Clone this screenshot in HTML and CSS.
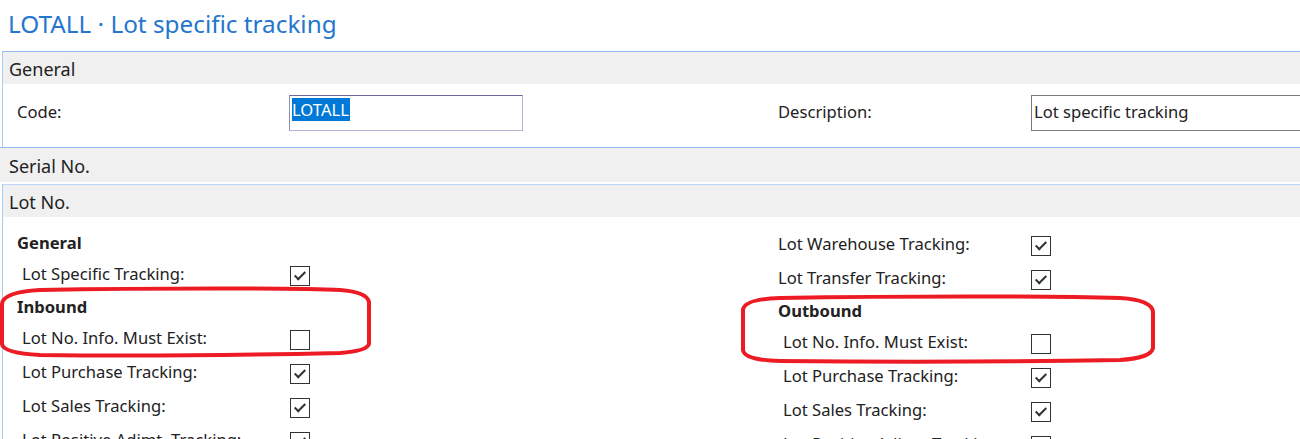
FILE: index.html
```html
<!DOCTYPE html>
<html>
<head>
<meta charset="utf-8">
<link rel="stylesheet" href="styles.css">
</head>
<body>
<div class="page">
  <h1 class="title">LOTALL · Lot specific tracking</h1>

  <section class="panel panel-open">
    <div class="panel-head">General</div>
    <div class="panel-body form-grid">
      <div class="lbl">Code:</div>
      <div class="ctl"><div class="input focused"><span class="sel">LOTALL</span></div></div>
      <div class="lbl">Description:</div>
      <div class="ctl"><div class="input plain">Lot specific tracking</div></div>
    </div>
  </section>

  <section class="panel panel-collapsed">
    <div class="panel-head">Serial No.</div>
  </section>

  <section class="panel panel-open lot">
    <div class="panel-head">Lot No.</div>
    <div class="panel-body lot-body">
      <div class="col col-left">
        <div class="group">General</div>
        <div class="row"><span class="rl">Lot Specific Tracking:</span><span class="cb checked"></span></div>
        <div class="group">Inbound</div>
        <div class="row"><span class="rl">Lot No. Info. Must Exist:</span><span class="cb"></span></div>
        <div class="row"><span class="rl">Lot Purchase Tracking:</span><span class="cb checked"></span></div>
        <div class="row"><span class="rl">Lot Sales Tracking:</span><span class="cb checked"></span></div>
        <div class="row"><span class="rl">Lot Positive Adjmt. Tracking:</span><span class="cb checked"></span></div>
      </div>
      <div class="col col-right">
        <div class="row flush"><span class="rl">Lot Warehouse Tracking:</span><span class="cb checked"></span></div>
        <div class="row flush"><span class="rl">Lot Transfer Tracking:</span><span class="cb checked"></span></div>
        <div class="group">Outbound</div>
        <div class="row"><span class="rl">Lot No. Info. Must Exist:</span><span class="cb"></span></div>
        <div class="row"><span class="rl">Lot Purchase Tracking:</span><span class="cb checked"></span></div>
        <div class="row"><span class="rl">Lot Sales Tracking:</span><span class="cb checked"></span></div>
        <div class="row"><span class="rl">Lot Positive Adjmt. Tracking:</span><span class="cb checked"></span></div>
      </div>
    </div>
  </section>

  <svg class="annot" width="1300" height="439" viewBox="0 0 1300 439">
    <path d="M 40 290 C 150 288, 300 288, 340 290 Q 367 292 369 302 L 369 344 Q 367 351 340 353 C 250 355, 120 356, 40 355 Q 3 353 2 344 L 2 304 Q 3 292 40 290 Z"/>
    <path d="M 780 298 C 900 296, 1050 296, 1120 298 Q 1152 300 1153 312 L 1153 348 Q 1151 358 1120 360 C 1000 362, 880 362, 780 361 Q 744 360 743 350 L 743 310 Q 744 299 780 298 Z"/>
  </svg>
</div>
</body>
</html>
```

FILE: styles.css
```css
html, body {
  margin: 0;
  padding: 0;
  background: #ffffff;
  overflow: hidden;
}

.page {
  position: relative;
  width: 1300px;
  height: 439px;
  overflow: hidden;
  font-family: "Noto Sans", "Open Sans", "DejaVu Sans", sans-serif;
  color: #222222;
}

.title {
  margin: 0 0 11px 0;
  padding: 8px 8px 0 8px;
  height: 32px;
  line-height: 32px;
  font-size: 24.3px;
  font-weight: 400;
  color: #2476cf;
  white-space: nowrap;
}

.panel {
  border-top: 1px solid #93bcf2;
}

.panel-open {
  margin-left: 2px;
  border-left: 1px solid #a9cbf6;
}

.panel-head {
  background: #f0f0f0;
  height: 32px;
  line-height: 34px;
  padding-left: 6px;
  font-size: 18px;
  color: #222222;
  white-space: nowrap;
}

.panel-collapsed .panel-head {
  height: 34px;
  line-height: 36px;
  padding-left: 9px;
}

.panel-collapsed {
  margin-bottom: 2px;
}

.lot {
  border-top-color: #b9d5f8;
}

.form-grid {
  display: grid;
  grid-template-columns: 272px 489px 253px 1fr;
  align-items: center;
  padding: 11px 0 16px 14px;
}

.lbl {
  font-size: 16.6px;
  white-space: nowrap;
  margin-bottom: 4px;
}

.input {
  height: 34px;
  box-sizing: content-box;
  display: flex;
  align-items: center;
  font-size: 16.6px;
  white-space: nowrap;
}

.input.focused {
  width: 230px;
  border: 1px solid #b4b4d6;
  border-top-color: #6c6c9c;
  border-left-color: #8e8eb6;
  padding-left: 2px;
  align-items: flex-start;
  padding-top: 0;
}

.sel {
  background: #0078d7;
  color: #ffffff;
  margin-top: 2px;
  height: 23px;
  line-height: 23px;
  padding-right: 1px;
}

.input.plain {
  border: 1px solid #7a7a7a;
  border-right: none;
  padding-left: 2px;
  margin-right: -10px;
  height: 31px;
  padding-bottom: 3px;
}

.lot-body {
  display: flex;
}

.col {
  display: flex;
  flex-direction: column;
  padding-top: 9px;
}

.col-left {
  width: 775px;
  padding-left: 14px;
  box-sizing: border-box;
  flex: none;
}

.col-right {
  flex: 1;
}

.group {
  margin-top: 4px;
  height: 26px;
  line-height: 26px;
  font-size: 16.6px;
  font-weight: 700;
  white-space: nowrap;
}

.row {
  height: 34px;
  display: flex;
  align-items: center;
  font-size: 16.6px;
  white-space: nowrap;
}

.rl {
  box-sizing: border-box;
  padding-left: 5px;
  flex: none;
}

.col-left .rl {
  width: 273px;
}

.col-right .rl {
  width: 253px;
}

.col-right .row.flush .rl {
  padding-left: 0;
}

.cb {
  width: 18px;
  height: 18px;
  border: 1px solid #333333;
  background: #ffffff;
  margin-top: 6px;
  flex: none;
  position: relative;
}

.cb.checked::after {
  content: "";
  position: absolute;
  left: 6px;
  top: 2px;
  width: 4px;
  height: 9px;
  border-right: 2px solid #333333;
  border-bottom: 2px solid #333333;
  transform: rotate(45deg);
}

.annot {
  position: absolute;
  left: 0;
  top: 0;
  pointer-events: none;
}

.annot path {
  fill: none;
  stroke: #ed1c24;
  stroke-width: 4;
  stroke-linejoin: round;
}
```
